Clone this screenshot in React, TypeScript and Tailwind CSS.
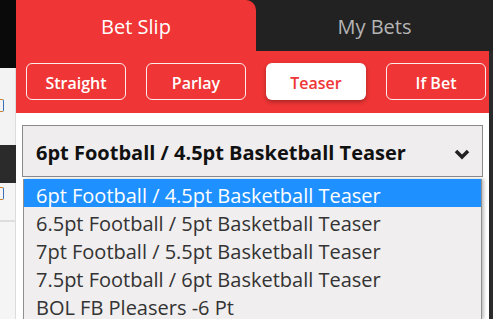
import React from "react";

const font = { fontFamily: '"Open Sans", "Noto Sans", sans-serif' };

function LeftStrip() {
  return (
    <div className="flex w-[16px] shrink-0 flex-col">
      <div className="h-[68px] bg-[#0a0a0a]" />
      <div className="relative h-[77px] border-r border-[#dcdcdc] bg-[#f3f3f3]">
        <div className="absolute left-[-8px] top-[31px] h-[13px] w-[12px] rounded-[2px] border border-[#c9822a] border-r-[#3b6fb5]" />
      </div>
      <div className="h-[38px] bg-[#2b2b2b]" />
      <div className="relative h-[37px] border-r border-[#dcdcdc] bg-[#f5f5f5]">
        <div className="absolute left-[-8px] top-[4px] h-[13px] w-[12px] rounded-[2px] border border-[#c9822a] border-r-[#3b6fb5]" />
      </div>
      <div className="h-[2px] bg-[#dedede]" />
      <div className="flex-1 border-r border-[#dcdcdc] bg-[#f5f5f5]" />
    </div>
  );
}

const btnBase =
  "flex h-[37px] w-[100px] items-center justify-center rounded-[6px] pt-[3px] text-[16px] font-semibold";

export default function App() {
  const options = [
    "6.5pt Football / 5pt Basketball Teaser",
    "7pt Football / 5.5pt Basketball Teaser",
    "7.5pt Football / 6pt Basketball Teaser",
    "BOL FB Pleasers -6 Pt",
  ];
  return (
    <div className="flex h-[319px] w-[493px] overflow-hidden bg-[#222222]" style={font}>
      <LeftStrip />
      <div className="flex flex-1 flex-col">
        <div className="flex h-[53px]">
          <div className="flex w-[240px] items-center justify-center rounded-tr-[10px] bg-[#ef3535] pt-[2px] text-[20px] text-white">
            Bet Slip
          </div>
          <div className="flex flex-1 items-center justify-center pt-[2px] text-[20px] text-[#b5b5b5]">
            My Bets
          </div>
        </div>
        <div className="flex flex-1">
          <div className="flex w-[473px] flex-col bg-white">
            <div className="flex h-[62px] gap-[20px] bg-[#ef3535] pl-[10px] pt-[12px]">
              <div className={`${btnBase} border border-white/90 text-white`}>Straight</div>
              <div className={`${btnBase} border border-white/90 text-white`}>Parlay</div>
              <div className={`${btnBase} bg-white font-normal text-[#ef3535] shadow-[0_2px_4px_rgba(0,0,0,0.3)]`}>
                Teaser
              </div>
              <div className={`${btnBase} border border-white/90 text-white`}>If Bet</div>
            </div>
            <div className="mx-[6px] mt-[12px] flex h-[52px] items-center justify-between border border-[#8a8a8a] bg-[#efeded] pl-[13px] pr-[12px]">
              <span className="pt-[4px] text-[20px] font-bold text-[#111]">
                6pt Football / 4.5pt Basketball Teaser
              </span>
              <svg width="16" height="11" viewBox="0 0 16 11" className="mt-[6px]">
                <path d="M2 2 L8 8 L14 2" fill="none" stroke="#222" strokeWidth="3.5" />
              </svg>
            </div>
            <div className="ml-[7px] mr-[7px] mt-[2px] flex flex-1 flex-col border-l border-r border-[#8f8f8f] bg-[#f0eeee] shadow-[2px_0_3px_rgba(0,0,0,0.25)]">
              <div className="flex h-[28px] items-center bg-[#1e90ff] pl-[12px] pt-[6px] text-[20px] text-white">
                6pt Football / 4.5pt Basketball Teaser
              </div>
              {options.map((o) => (
                <div key={o} className="flex h-[28px] items-center pl-[12px] pt-[6px] text-[20px] text-[#333]">
                  {o}
                </div>
              ))}
            </div>
          </div>
          <div className="flex-1 bg-[#2a2a2a]" />
        </div>
      </div>
    </div>
  );
}
